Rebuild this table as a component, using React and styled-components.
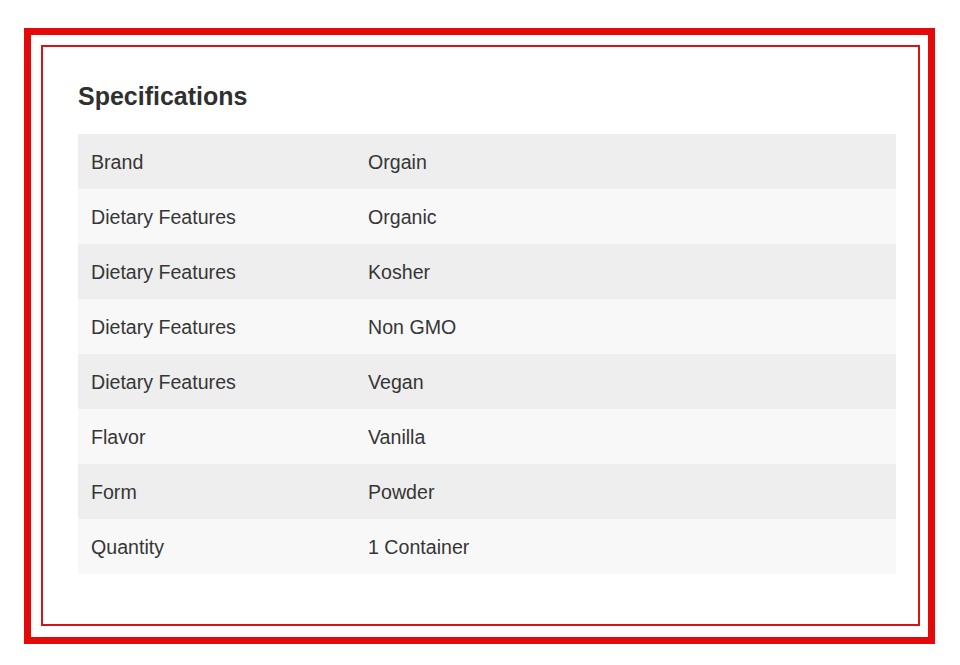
import React from 'react';
import styled, { createGlobalStyle } from 'styled-components';

const GlobalStyle = createGlobalStyle`
  html, body {
    margin: 0;
    padding: 0;
    background: #ffffff;
  }
  body {
    font-family: "Liberation Sans", Arial, Helvetica, sans-serif;
    color: #333333;
  }
`;

const Page = styled.div`
  width: 960px;
  height: 665px;
  padding: 28px 0 0 24px;
  box-sizing: border-box;
`;

const OuterFrame = styled.div`
  width: 911px;
  height: 616px;
  border: 7px solid #e50a0a;
  box-sizing: border-box;
  padding: 10px 8px 11px 10px;
`;

const InnerFrame = styled.div`
  height: 100%;
  border: 2px solid #d51414;
  box-sizing: border-box;
  padding: 34px 22px 0 35px;
`;

const Title = styled.h2`
  margin: 0 0 23px;
  font-size: 25px;
  line-height: 30px;
  font-weight: 700;
  color: #2f2f2f;
`;

const SpecTable = styled.table`
  width: 100%;
  border-collapse: collapse;
  font-size: 19.6px;
  color: #363636;
`;

const Row = styled.tr`
  height: 55px;
  background: ${p => (p.$odd ? '#eeeeee' : '#f8f8f8')};
`;

const Cell = styled.td`
  padding: 2px 13px 0;
  vertical-align: middle;
  width: ${p => p.$width || 'auto'};
`;

const specs = [
  { label: 'Brand', value: 'Orgain' },
  { label: 'Dietary Features', value: 'Organic' },
  { label: 'Dietary Features', value: 'Kosher' },
  { label: 'Dietary Features', value: 'Non GMO' },
  { label: 'Dietary Features', value: 'Vegan' },
  { label: 'Flavor', value: 'Vanilla' },
  { label: 'Form', value: 'Powder' },
  { label: 'Quantity', value: '1 Container' },
];

const App = () => {
  return (
    <>
      <GlobalStyle />
      <Page>
        <OuterFrame>
          <InnerFrame>
            <Title>Specifications</Title>
            <SpecTable>
              <tbody>
                {specs.map((spec, i) => (
                  <Row key={i} $odd={i % 2 === 0}>
                    <Cell $width="251px">{spec.label}</Cell>
                    <Cell>{spec.value}</Cell>
                  </Row>
                ))}
              </tbody>
            </SpecTable>
          </InnerFrame>
        </OuterFrame>
      </Page>
    </>
  );
};

export default App;
